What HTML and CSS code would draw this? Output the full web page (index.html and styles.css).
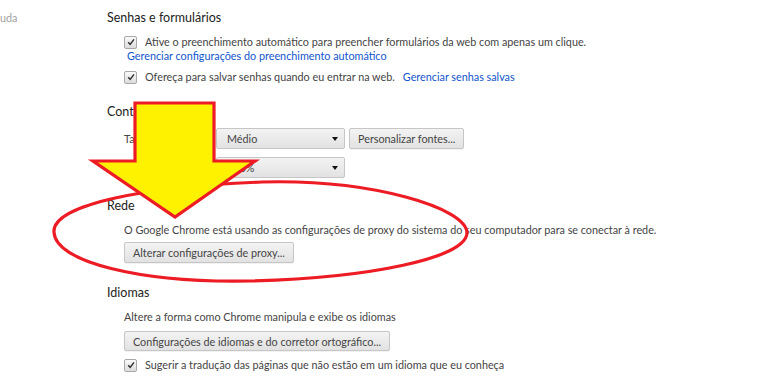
FILE: index.html
```html
<!DOCTYPE html>
<html lang="pt-BR">
  <head>
    <meta charset="UTF-8" />
    <meta name="viewport" content="width=device-width, initial-scale=1.0" />
    <title>Configurações</title>
    <link rel="stylesheet" href="styles.css">
  </head>
  <body>
    <div class="page">
      <aside class="sidebar">
        <span class="nav-item">uda</span>
      </aside>

      <main class="content">
        <section class="section passwords">
          <h3>Senhas e formulários</h3>
          <div class="section-body">
            <div class="check-row">
              <span class="checkbox">
                <svg viewBox="0 0 12 12" width="12" height="12"><path d="M2.6 6.4 L5 8.8 L9.6 2.8" fill="none" stroke="#333" stroke-width="1.8"/></svg>
              </span>
              <span>Ative o preenchimento automático para preencher formulários da web com apenas um clique.</span>
            </div>
            <a class="link sub-link" href="#">Gerenciar configurações do preenchimento automático</a>
            <div class="check-row spaced">
              <span class="checkbox">
                <svg viewBox="0 0 12 12" width="12" height="12"><path d="M2.6 6.4 L5 8.8 L9.6 2.8" fill="none" stroke="#333" stroke-width="1.8"/></svg>
              </span>
              <span>Ofereça para salvar senhas quando eu entrar na web.</span>
              <a class="link after-text" href="#">Gerenciar senhas salvas</a>
            </div>
          </div>
        </section>

        <section class="section web-content">
          <h3>Conteúdo da web</h3>
          <div class="section-body">
            <div class="field-row">
              <span class="field-label">Tamanho da fonte:</span>
              <div class="select">Médio<span class="caret"></span></div>
              <button class="btn">Personalizar fontes...</button>
            </div>
            <div class="field-row">
              <span class="field-label">Zoom da página:</span>
              <div class="select">100%<span class="caret"></span></div>
            </div>
          </div>
        </section>

        <section class="section network">
          <h3>Rede</h3>
          <div class="section-body">
            <p class="text">O Google Chrome está usando as configurações de proxy do sistema do seu computador para se conectar à rede.</p>
            <button class="btn">Alterar configurações de proxy...</button>
          </div>
        </section>

        <section class="section languages">
          <h3>Idiomas</h3>
          <div class="section-body">
            <p class="text">Altere a forma como Chrome manipula e exibe os idiomas</p>
            <button class="btn">Configurações de idiomas e do corretor ortográfico...</button>
            <div class="check-row lang-check">
              <span class="checkbox">
                <svg viewBox="0 0 12 12" width="12" height="12"><path d="M2.6 6.4 L5 8.8 L9.6 2.8" fill="none" stroke="#333" stroke-width="1.8"/></svg>
              </span>
              <span>Sugerir a tradução das páginas que não estão em um idioma que eu conheça</span>
            </div>
          </div>
        </section>
      </main>
    </div>

    <!-- marcação desenhada por cima da captura -->
    <svg class="markup" viewBox="0 0 768 378" width="768" height="378">
      <path d="M54 232 C 52 204, 150 186, 262 182 C 372 179, 467 208, 467 233 C 466 258, 370 278, 250 281 C 140 283, 55 262, 54 232 Z"
            fill="none" stroke="#ed1c24" stroke-width="3.2"/>
      <path d="M135 103 L214 103 L214 161 L255 161 L175 217 L93 161 L135 161 Z"
            fill="#fff200" stroke="#ed1c24" stroke-width="3.2" stroke-linejoin="miter"/>
    </svg>
  </body>
</html>
```

FILE: styles.css
```css
body {
  margin: 0;
  padding: 0;
  background: #fff;
  font-family: Lato, "Liberation Sans", sans-serif;
  font-size: 10.8px;
  color: #444;
  overflow: hidden;
}
.page {
  display: flex;
  width: 768px;
  height: 378px;
}
.sidebar {
  width: 107px;
  flex-shrink: 0;
  padding-top: 11px;
}
.nav-item {
  display: block;
  color: #a0a0a0;
  font-size: 10.8px;
  line-height: 14px;
}
.content {
  flex: 1;
  padding-top: 9px;
}
h3 {
  margin: 0;
  font-size: 12.5px;
  font-weight: normal;
  line-height: 18px;
  color: #222;
}
.section-body {
  padding-left: 17px;
  display: flex;
  flex-direction: column;
  align-items: flex-start;
}
.passwords {
  height: 94px;
}
.passwords .section-body {
  margin-top: 8px;
}
.web-content {
  height: 94px;
}
.web-content .section-body {
  margin-top: 7px;
  gap: 8px;
}
.network {
  height: 87px;
}
.network .section-body {
  margin-top: 8px;
}
.languages .section-body {
  margin-top: 8px;
}
.check-row {
  display: flex;
  align-items: center;
  line-height: 14px;
}
.check-row.spaced {
  margin-top: 7px;
}
.checkbox {
  width: 11px;
  height: 11px;
  margin-right: 8px;
  border: 1px solid #a8a8a8;
  border-radius: 2px;
  background: linear-gradient(#fafafa, #dcdcdc);
  display: flex;
  align-items: center;
  justify-content: center;
}
.checkbox svg {
  width: 10px;
  height: 10px;
}
.link {
  color: #15c;
  text-decoration: none;
  line-height: 14px;
}
.sub-link {
  margin-left: 3px;
}
.after-text {
  margin-left: 8px;
}
.field-row {
  display: flex;
  align-items: center;
}
.field-label {
  width: 92px;
}
.select {
  position: relative;
  box-sizing: border-box;
  width: 129px;
  height: 21px;
  padding-left: 10px;
  line-height: 19px;
  border: 1px solid #c6c6c6;
  border-radius: 2px;
  background: linear-gradient(#f3f3f3, #e2e2e2);
  color: #444;
}
.caret {
  position: absolute;
  right: 6px;
  top: 8px;
  border-left: 3.5px solid transparent;
  border-right: 3.5px solid transparent;
  border-top: 4px solid #111;
}
.btn {
  box-sizing: border-box;
  height: 21px;
  padding: 0 8px;
  font-family: inherit;
  font-size: 10.8px;
  color: #444;
  border: 1px solid #c6c6c6;
  border-radius: 2px;
  background: linear-gradient(#f3f3f3, #e2e2e2);
  box-shadow: 0 1px 0 rgba(0, 0, 0, 0.05);
}
.field-row .btn {
  margin-left: 4px;
}
.text {
  margin: 0;
  line-height: 14px;
}
.network .btn {
  margin-top: 5px;
}
.languages .btn {
  margin-top: 7px;
  height: 20px;
}
.lang-check {
  margin-top: 7px;
}
.markup {
  position: absolute;
  left: 0;
  top: 0;
  pointer-events: none;
}
```
